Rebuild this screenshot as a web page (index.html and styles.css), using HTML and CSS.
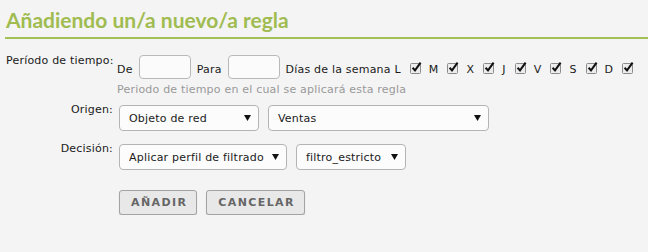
FILE: index.html
```html
<!doctype html>
<html lang="es">
<head>
    <meta charset="UTF-8">
    <title>Añadiendo regla</title>
    <link rel="stylesheet" href="styles.css">
</head>
<body>
<h1 class="title">Añadiendo un/a nuevo/a regla</h1>
<form class="rule">
    <!-- periodo -->
    <div class="row">
        <label class="lbl">Período de tiempo:</label>
        <div class="ctrl ctrl-time">
            <div class="line">
                <span class="txt">De</span>
                <input class="box" type="text">
                <span class="txt">Para</span>
                <input class="box" type="text">
                <span class="txt">Días de la semana L</span>
                <i class="chk"><svg width="13" height="13" viewBox="0 0 13 13"><rect x="0.5" y="2.5" width="10" height="10" rx="1" fill="#ececec" stroke="#8c8c8c"/><path d="M2.6 6.8 L5 9.4 L10.6 1.6" fill="none" stroke="#111" stroke-width="2"/></svg></i>
                <span class="txt">M</span>
                <i class="chk"><svg width="13" height="13" viewBox="0 0 13 13"><rect x="0.5" y="2.5" width="10" height="10" rx="1" fill="#ececec" stroke="#8c8c8c"/><path d="M2.6 6.8 L5 9.4 L10.6 1.6" fill="none" stroke="#111" stroke-width="2"/></svg></i>
                <span class="txt">X</span>
                <i class="chk"><svg width="13" height="13" viewBox="0 0 13 13"><rect x="0.5" y="2.5" width="10" height="10" rx="1" fill="#ececec" stroke="#8c8c8c"/><path d="M2.6 6.8 L5 9.4 L10.6 1.6" fill="none" stroke="#111" stroke-width="2"/></svg></i>
                <span class="txt">J</span>
                <i class="chk"><svg width="13" height="13" viewBox="0 0 13 13"><rect x="0.5" y="2.5" width="10" height="10" rx="1" fill="#ececec" stroke="#8c8c8c"/><path d="M2.6 6.8 L5 9.4 L10.6 1.6" fill="none" stroke="#111" stroke-width="2"/></svg></i>
                <span class="txt">V</span>
                <i class="chk"><svg width="13" height="13" viewBox="0 0 13 13"><rect x="0.5" y="2.5" width="10" height="10" rx="1" fill="#ececec" stroke="#8c8c8c"/><path d="M2.6 6.8 L5 9.4 L10.6 1.6" fill="none" stroke="#111" stroke-width="2"/></svg></i>
                <span class="txt">S</span>
                <i class="chk"><svg width="13" height="13" viewBox="0 0 13 13"><rect x="0.5" y="2.5" width="10" height="10" rx="1" fill="#ececec" stroke="#8c8c8c"/><path d="M2.6 6.8 L5 9.4 L10.6 1.6" fill="none" stroke="#111" stroke-width="2"/></svg></i>
                <span class="txt">D</span>
                <i class="chk"><svg width="13" height="13" viewBox="0 0 13 13"><rect x="0.5" y="2.5" width="10" height="10" rx="1" fill="#ececec" stroke="#8c8c8c"/><path d="M2.6 6.8 L5 9.4 L10.6 1.6" fill="none" stroke="#111" stroke-width="2"/></svg></i>
            </div>
            <div class="hint">Periodo de tiempo en el cual se aplicará esta regla</div>
        </div>
    </div>
    <!-- origen -->
    <div class="row row-sel">
        <label class="lbl">Origen:</label>
        <div class="ctrl">
            <span class="sel sel-obj">
                <select><option>Objeto de red</option></select>
                <svg class="arrow" width="7" height="6" viewBox="0 0 7 6"><path d="M0 0 H7 L3.5 6 Z" fill="#111"/></svg>
            </span>
            <span class="sel sel-net">
                <select><option>Ventas</option></select>
                <svg class="arrow" width="7" height="6" viewBox="0 0 7 6"><path d="M0 0 H7 L3.5 6 Z" fill="#111"/></svg>
            </span>
        </div>
    </div>
    <!-- decision -->
    <div class="row row-sel row-dec">
        <label class="lbl">Decisión:</label>
        <div class="ctrl">
            <span class="sel sel-act">
                <select><option>Aplicar perfil de filtrado</option></select>
                <svg class="arrow" width="7" height="6" viewBox="0 0 7 6"><path d="M0 0 H7 L3.5 6 Z" fill="#111"/></svg>
            </span>
            <span class="sel sel-prof">
                <select><option>filtro_estricto</option></select>
                <svg class="arrow" width="7" height="6" viewBox="0 0 7 6"><path d="M0 0 H7 L3.5 6 Z" fill="#111"/></svg>
            </span>
        </div>
    </div>
    <div class="actions">
        <button type="button" class="btn">Añadir</button>
        <button type="button" class="btn">Cancelar</button>
    </div>
</form>
</body>
</html>
```

FILE: styles.css
```css
*{
    box-sizing: border-box;
}
body{
    margin: 0;
    background: #f4f4f4;
    font-family: "DejaVu Sans", Verdana, sans-serif;
    font-size: 11px;
    letter-spacing: 0.2px;
    color: #1a1a1a;
}
.title{
    margin: 0 0 0 5px;
    padding: 7px 0 4px 1px;
    font-family: Lato, "DejaVu Sans", sans-serif;
    font-size: 21px;
    line-height: 26px;
    font-weight: bold;
    letter-spacing: 0;
    color: #a0bc50;
    border-bottom: 2px solid #a3bf55;
}
.rule{
    padding: 15px 0 0 6px;
}
.row{
    display: grid;
    grid-template-columns: 107px 1fr;
    column-gap: 4px;
    align-items: start;
}
.lbl{
    text-align: right;
    line-height: 14px;
    white-space: nowrap;
}
.ctrl{
    display: flex;
    gap: 9px;
    margin-top: 1px;
}
.ctrl-time{
    flex-direction: column;
    gap: 0;
}
.line{
    display: flex;
    align-items: flex-end;
}
.txt{
    line-height: 14px;
    margin-bottom: 2px;
    white-space: nowrap;
}
.box{
    width: 52px;
    height: 24px;
    margin: 0 6px;
    border: 1px solid #b9b9b9;
    border-radius: 4px;
    background: #fbfbfb;
}
.chk{
    display: block;
    width: 13px;
    height: 13px;
    margin: 0 6px 5px 9px;
}
.chk svg{
    display: block;
}
.hint{
    margin-top: 4px;
    line-height: 14px;
    color: #999;
}
.row-sel{
    margin-top: 6px;
}
.row-sel .ctrl{
    margin-top: 2px;
    padding-left: 2px;
}
.row-dec{
    margin-top: 11px;
}
.sel{
    position: relative;
    display: block;
}
.sel select{
    display: block;
    width: 100%;
    height: 26px;
    padding: 0 20px 0 9px;
    appearance: none;
    -webkit-appearance: none;
    font-family: "DejaVu Sans", Verdana, sans-serif;
    font-size: 11px;
    letter-spacing: 0.2px;
    color: #1a1a1a;
    background: #fcfcfc;
    border: 1px solid #b4b4b4;
    border-radius: 4px;
}
.sel .arrow{
    position: absolute;
    right: 8px;
    top: 10px;
    pointer-events: none;
}
.sel-obj{ width: 140px; }
.sel-net{ width: 221px; }
.sel-act{ width: 168px; }
.sel-prof{ width: 110px; }
.actions{
    display: flex;
    gap: 9px;
    margin: 20px 0 0 113px;
}
.btn{
    height: 25px;
    padding: 0 9px 0 11px;
    font-family: "DejaVu Sans", Verdana, sans-serif;
    font-size: 11px;
    font-weight: bold;
    letter-spacing: 1.4px;
    text-transform: uppercase;
    color: #666;
    background: #e8e8e8;
    border: 1px solid #a3a3a3;
    border-radius: 3px;
    box-shadow: 0 1px 1px #c8c8c8;
}
```
